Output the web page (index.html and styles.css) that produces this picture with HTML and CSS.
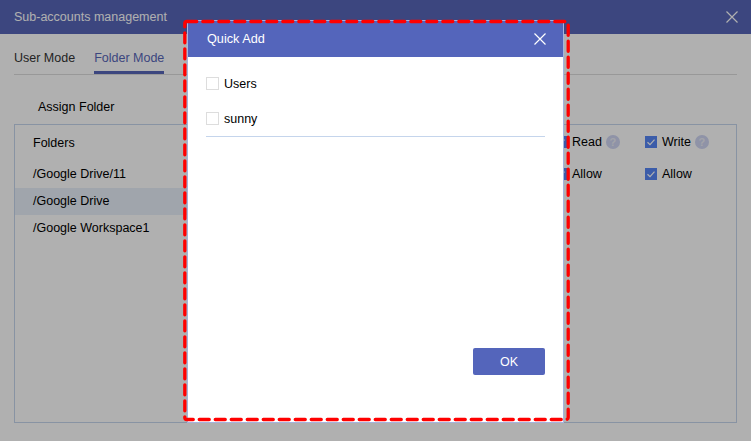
FILE: index.html
```html
<!DOCTYPE html>
<html>
<head>
  <title>Sub-accounts management</title>
  <link rel="stylesheet" href="styles.css">
</head>
<body>
  <div class="page">
    <div class="topbar">
      <span class="topbar-title">Sub-accounts management</span>
      <svg class="close-icon" width="14" height="14" viewBox="0 0 14 14"><path d="M1.5 1.5L12.5 12.5M12.5 1.5L1.5 12.5"/></svg>
    </div>

    <div class="content">
      <div class="tabs">
        <div class="tab">User Mode</div>
        <div class="tab active">Folder Mode</div>
      </div>

      <div class="assign">Assign Folder</div>

      <div class="folder-box">
        <div class="row head">
          <div class="name">Folders</div>
          <div class="perm read">
            <span class="check"><svg width="12" height="12" viewBox="0 0 12 12"><path d="M2.5 6.2L5 8.6L9.5 3.6"/></svg></span>
            <span>Read</span><span class="help">?</span>
          </div>
          <div class="perm">
            <span class="check"><svg width="12" height="12" viewBox="0 0 12 12"><path d="M2.5 6.2L5 8.6L9.5 3.6"/></svg></span>
            <span>Write</span><span class="help">?</span>
          </div>
        </div>
        <div class="row">
          <div class="name">/Google Drive/11</div>
          <div class="perm read">
            <span class="check"><svg width="12" height="12" viewBox="0 0 12 12"><path d="M2.5 6.2L5 8.6L9.5 3.6"/></svg></span>
            <span>Allow</span>
          </div>
          <div class="perm">
            <span class="check"><svg width="12" height="12" viewBox="0 0 12 12"><path d="M2.5 6.2L5 8.6L9.5 3.6"/></svg></span>
            <span>Allow</span>
          </div>
        </div>
        <div class="row">
          <div class="name selected">/Google Drive</div>
        </div>
        <div class="row">
          <div class="name">/Google Workspace1</div>
        </div>
      </div>
    </div>
  </div>

  <div class="scrim"></div>

  <div class="dialog">
    <div class="dialog-head">
      <span>Quick Add</span>
      <svg class="dialog-close" width="14" height="14" viewBox="0 0 14 14"><path d="M1.5 1.5L12.5 12.5M12.5 1.5L1.5 12.5"/></svg>
    </div>
    <div class="dialog-body">
      <div class="user-list">
        <label class="user"><span class="box"></span>Users</label>
        <label class="user"><span class="box"></span>sunny</label>
      </div>
      <div class="dialog-foot">
        <button class="ok">OK</button>
      </div>
    </div>
  </div>

  <!-- red highlight drawn round the dialog -->
  <svg class="highlight" width="751" height="441" viewBox="0 0 751 441">
    <rect x="184.8" y="21.5" width="383.4" height="398" rx="2"/>
  </svg>
</body>
</html>
```

FILE: styles.css
```css
html, body {
  margin: 0;
  padding: 0;
}
body {
  position: relative;
  width: 751px;
  height: 441px;
  overflow: hidden;
  font-family: "Liberation Sans", Arial, sans-serif;
  font-size: 12.5px;
  color: #000;
  background: #fff;
}
.page {
  height: 441px;
  display: flex;
  flex-direction: column;
}
.topbar {
  height: 34px;
  flex-shrink: 0;
  background: #5766b8;
  color: #fff;
  display: flex;
  align-items: center;
  justify-content: space-between;
  padding: 0 12px 1px 14px;
  box-sizing: border-box;
}
.close-icon path, .dialog-close path {
  stroke: #fff;
  stroke-width: 1.2;
  fill: none;
}
.content {
  flex: 1;
  display: flex;
  flex-direction: column;
  padding: 0 14px 18px;
}
.tabs {
  display: flex;
  gap: 19px;
  height: 40px;
  border-bottom: 1px solid #ddd;
  flex-shrink: 0;
}
.tab {
  padding-top: 16px;
  height: 24px;
  line-height: 17px;
  color: #333;
}
.tab.active {
  color: #5766b8;
  border-bottom: 3px solid #5766b8;
  height: 21px;
}
.assign {
  height: 49px;
  line-height: 65px;
  padding-left: 24px;
  flex-shrink: 0;
}
.folder-box {
  flex: 1;
  border: 1px solid #c5d5ec;
}
.row {
  height: 27px;
  display: flex;
  align-items: center;
}
.row.head {
  height: 36px;
}
.name {
  width: 522px;
  height: 27px;
  line-height: 27px;
  padding-left: 18px;
  flex-shrink: 0;
}
.name.selected {
  background: #e8f0fa;
}
.perm {
  width: 89px;
  flex-shrink: 0;
  box-sizing: border-box;
  display: flex;
  align-items: center;
  gap: 5px;
  height: 25px;
  margin-bottom: 2px;
}
.perm.read {
  width: 90px;
}
.check {
  width: 12px;
  height: 12px;
  background: #5686f5;
  flex-shrink: 0;
  display: flex;
}
.check path {
  stroke: #fff;
  stroke-width: 1.2;
  fill: none;
}
.help {
  width: 14px;
  height: 14px;
  margin-left: -1px;
  border-radius: 50%;
  background: #cfd5f2;
  color: #eceef6;
  font-size: 11px;
  font-weight: bold;
  line-height: 14px;
  text-align: center;
}
.scrim {
  position: absolute;
  top: 0;
  left: 0;
  right: 0;
  bottom: 0;
  background: rgba(0, 0, 0, 0.31);
}
.dialog {
  position: absolute;
  left: 187px;
  top: 20px;
  width: 375px;
  height: 401px;
  border: 1px solid #a5b4e0;
  background: #fff;
  display: flex;
  flex-direction: column;
}
.dialog-head {
  height: 36px;
  flex-shrink: 0;
  background: #5465bb;
  color: #fff;
  font-size: 12.7px;
  display: flex;
  align-items: center;
  justify-content: space-between;
  padding: 0 16px 0 19px;
}
.dialog-body {
  flex: 1;
  display: flex;
  flex-direction: column;
  padding: 9px 18px 47px;
}
.user-list {
  flex: 1;
}
.user {
  height: 35px;
  display: flex;
  align-items: center;
  gap: 5px;
}
.user:last-child {
  border-bottom: 1px solid #c5d5ec;
}
.box {
  width: 11px;
  height: 11px;
  border: 1px solid #ddd;
  background: #fff;
  flex-shrink: 0;
}
.dialog-foot {
  display: flex;
  justify-content: flex-end;
}
.ok {
  width: 72px;
  height: 27px;
  border: none;
  border-radius: 2px;
  background: #5465bb;
  color: #fff;
  font-family: inherit;
  font-size: 12.5px;
}
.highlight {
  position: absolute;
  top: 0;
  left: 0;
}
.highlight rect {
  fill: none;
  stroke: #ff0000;
  stroke-width: 3.3;
  stroke-dasharray: 10 6;
  stroke-linecap: round;
}
```
